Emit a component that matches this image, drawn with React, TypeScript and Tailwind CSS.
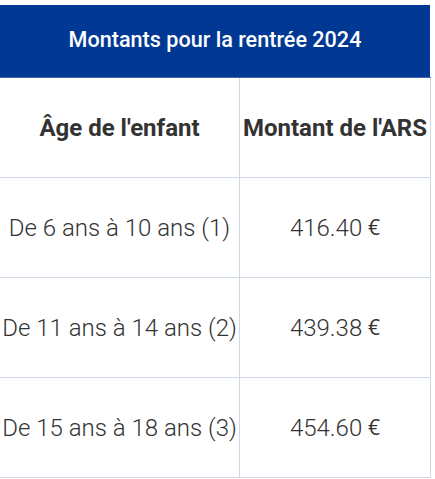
export default function App() {
  const rows = [
    ["De 6 ans à 10 ans (1)", "416.40"],
    ["De 11 ans à 14 ans (2)", "439.38"],
    ["De 15 ans à 18 ans (3)", "454.60"],
  ];
  return (
    <div className="w-[435px] h-[479px] bg-white pt-[5px]" style={{ fontFamily: "Roboto, sans-serif" }}>
      <div className="w-[431px]">
        <div className="h-[72px] bg-[#003893] flex items-center justify-center text-white text-[21.6px] font-medium mr-[1px] pb-[1px]">
          Montants pour la rentrée 2024
        </div>
        <div className="h-[1px] bg-[#4067b0]" />
        <div className="grid grid-cols-[240px_191px]">
          <div className="h-[100px] border-r border-b border-[#cfd8e8] flex items-center justify-center text-[24px] font-bold text-[#333] whitespace-nowrap">
            Âge de l'enfant
          </div>
          <div className="h-[100px] border-r border-b border-[#cfd8e8] flex items-center justify-center text-[24px] font-bold text-[#333] whitespace-nowrap">
            Montant de l'ARS
          </div>
          {rows.map(([a, b]) => (
            <>
              <div key={a} className="h-[100px] border-r border-b border-[#cfd8e8] flex items-center justify-center text-[24px] font-light text-[#333] whitespace-nowrap">
                {a}
              </div>
              <div key={b} className="h-[100px] border-r border-b border-[#cfd8e8] flex items-center justify-center text-[24px] font-light text-[#333] whitespace-nowrap">
                {b}&nbsp;<span className="font-normal text-[21px]" style={{ fontFamily: "'Open Sans', sans-serif" }}>€</span>
              </div>
            </>
          ))}
        </div>
      </div>
    </div>
  );
}
